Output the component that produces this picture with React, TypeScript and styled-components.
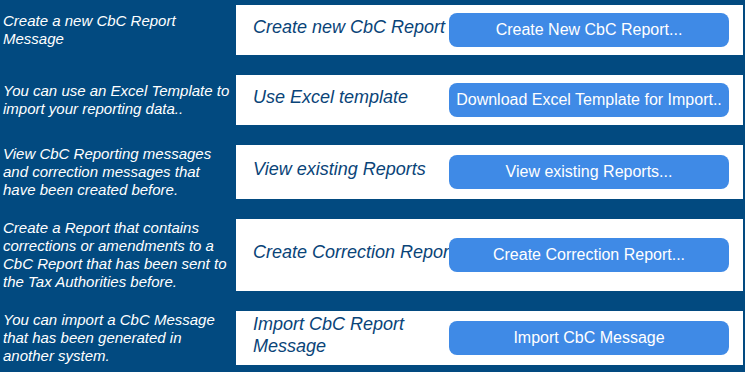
import React from "react";
import styled, { createGlobalStyle } from "styled-components";

const Global = createGlobalStyle`
  html, body { margin: 0; padding: 0; background: #024a80; }
  body { font-family: "Liberation Sans", Arial, sans-serif; }
`;

const Page = styled.div`
  display: flex;
  flex-direction: column;
  gap: 20px;
  padding: 5px 2px 0 0;
  width: 745px;
  box-sizing: border-box;
`;

const Row = styled.div`
  display: grid;
  grid-template-columns: 236px 507px;
`;

const Description = styled.div`
  align-self: center;
  width: 229px;
  padding-left: 3px;
  color: #ffffff;
  font-style: italic;
  font-size: 15px;
  line-height: 18px;
`;

const Panel = styled.div`
  background: #ffffff;
  display: flex;
  align-items: center;
  min-height: 50px;
  box-sizing: border-box;
  padding: 8px 14px 8px 17px;
`;

const Title = styled.div`
  width: 207px;
  flex-shrink: 0;
  margin: -7px -11px 0 0;
  color: #0a4478;
  font-style: italic;
  font-size: 18px;
  line-height: 22px;
`;

const ActionButton = styled.button`
  width: 280px;
  height: 34px;
  flex-shrink: 0;
  border: none;
  border-radius: 8px;
  background: #3f8ae6;
  color: #ffffff;
  font-family: "Liberation Sans", Arial, sans-serif;
  font-size: 16px;
  padding: 0 4px;
  white-space: nowrap;
  cursor: pointer;
`;

const items = [
  {
    desc: "Create a new CbC Report Message",
    title: "Create new CbC Report",
    button: "Create New CbC Report...",
  },
  {
    desc: "You can use an Excel Template to import your reporting data..",
    title: "Use Excel template",
    button: "Download Excel Template for Import..",
  },
  {
    desc: "View CbC Reporting messages and correction messages that have been created before.",
    title: "View existing Reports",
    button: "View existing Reports...",
  },
  {
    desc: "Create a Report that contains corrections or amendments to a CbC Report that has been sent to the Tax Authorities before.",
    title: "Create Correction Report",
    button: "Create Correction Report...",
  },
  {
    desc: "You can import a CbC Message that has been generated in another system.",
    title: "Import CbC Report Message",
    button: "Import CbC Message",
  },
];

export default function App() {
  return (
    <>
      <Global />
      <Page>
        {items.map((it) => (
          <Row key={it.title}>
            <Description>{it.desc}</Description>
            <Panel>
              <Title>{it.title}</Title>
              <ActionButton>{it.button}</ActionButton>
            </Panel>
          </Row>
        ))}
      </Page>
    </>
  );
}
